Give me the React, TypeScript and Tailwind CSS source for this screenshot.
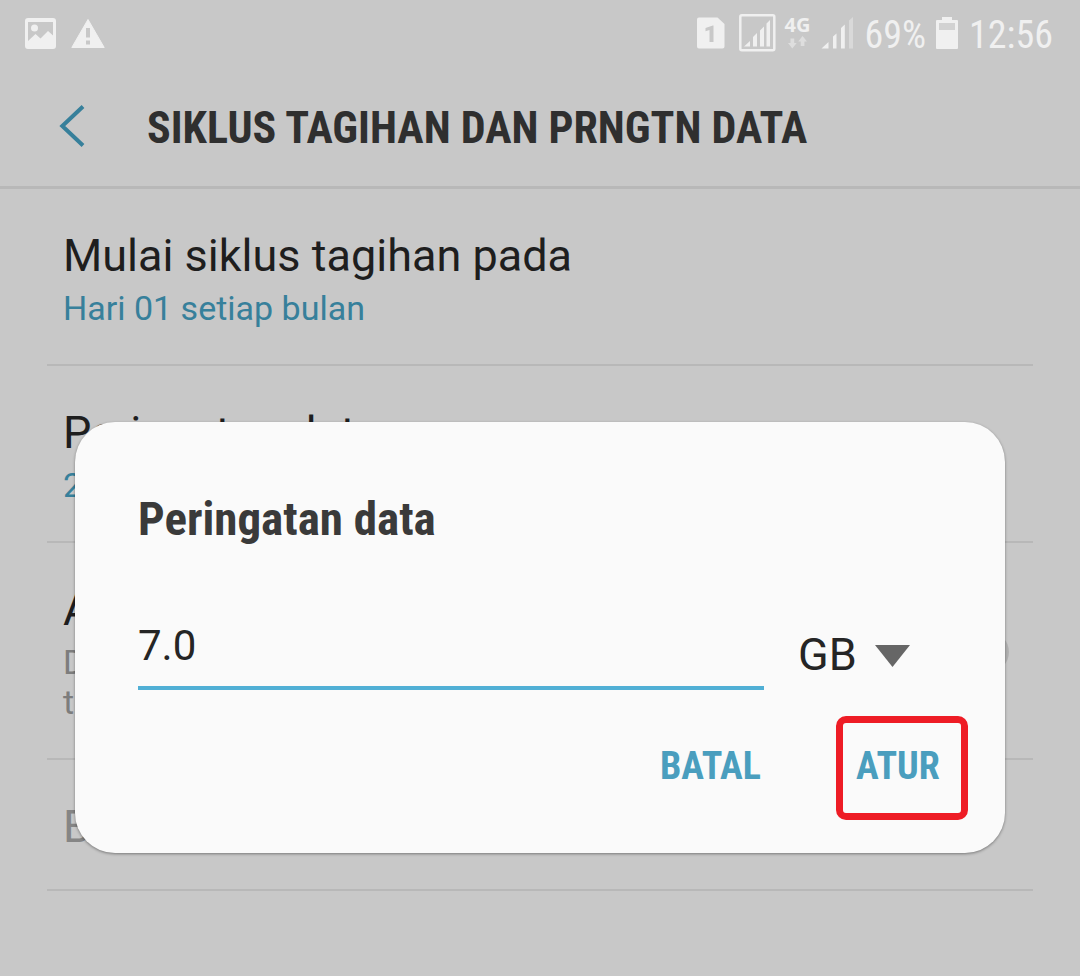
import { useState } from "react";

function StatusBar() {
  return (
    <div className="flex h-[66px] items-center justify-between pr-[27px] pl-[25px] text-[#f0f0f0]">
      <div className="flex items-center gap-[15px]">
        <svg width="31" height="31" viewBox="0 0 31 31" aria-label="Gambar" role="img">
          <path
            fill="currentColor"
            fillRule="evenodd"
            d="M3 0h25a3 3 0 0 1 3 3v25a3 3 0 0 1-3 3H3a3 3 0 0 1-3-3V3a3 3 0 0 1 3-3ZM3 4v19l7.500-7 5 4.500 7.500-7.500 5 4.500V4Z"
          />
          <circle cx="9.500" cy="10" r="3.500" fill="currentColor" />
        </svg>
        <svg width="34" height="31" viewBox="0 0 34 31" aria-label="Peringatan" role="img">
          <path
            fill="currentColor"
            stroke="currentColor"
            strokeLinejoin="round"
            strokeWidth="1"
            d="M17 1.500 33.200 29.500H.8Z"
          />
          <path fill="#c8c8c8" d="M15 10h4v9.500h-4ZM15 22.500h4v4h-4Z" />
        </svg>
      </div>
      <div className="flex items-center">
        <svg width="28" height="32" viewBox="0 0 28 32" aria-label="SIM 1" role="img">
          <path
            fill="currentColor"
            d="M2 .5h18.500L27.500 7v22.500a2 2 0 0 1-2 2H2a2 2 0 0 1-2-2v-27a2 2 0 0 1 2-2Z"
          />
          <path fill="#c8c8c8" d="M16.500 8.500V25h-4V13l-4 1.300v-3.200l7.300-2.600Z" />
        </svg>
        <svg className="ml-[14px]" width="37" height="38" viewBox="0 0 37 38" aria-hidden="true">
          <rect x="1.300" y="1.300" width="34" height="35" rx="1.500" fill="none" stroke="currentColor" strokeWidth="2.500" />
          <path
            fill="currentColor"
            d="M5 32.500 11 27v5.500ZM14 23l4-4v13.500h-4ZM21 16.500l4-4v20h-4ZM27.500 9.500 31 6v26.500h-3.500Z"
          />
        </svg>
        <div className="ml-[9px] flex flex-col items-center gap-[2px]">
          <span className="font-['Open_Sans',sans-serif] text-[20px] leading-[18px] font-bold">4G</span>
          <svg width="19" height="14" viewBox="0 0 19 14" aria-hidden="true" className="text-[#dedede]">
            <path
              fill="currentColor"
              d="M2.500 2.500h3.700v4.500h2.500L4.300 12.500 0 7h2.500ZM12.700 10V5.500h-2.500L14.600 0 19 5.500h-2.600V10Z"
            />
          </svg>
        </div>
        <svg className="ml-[10px]" width="33" height="32" viewBox="0 0 33 32" aria-label="Sinyal" role="img">
          <path fill="currentColor" d="M.5 31.500 7.500 25v6.500ZM12 19.500l3.500-3v15H12ZM20 11l3.800-3.500v24H20Z" />
          <path fill="#d9d9d9" d="M28 3.500 32 0v31.500h-4Z" />
        </svg>
        <span className="ml-[11px] pt-1 font-['Roboto_Condensed',Roboto,sans-serif] text-[38px] leading-[46px]">69%</span>
        <svg className="ml-[10px]" width="22" height="32" viewBox="0 0 22 32" aria-label="Baterai" role="img">
          <path fill="currentColor" d="M6 0h10v3h5a1 1 0 0 1 1 1v27a1 1 0 0 1-1 1H1a1 1 0 0 1-1-1V4a1 1 0 0 1 1-1h5Z" />
          <path fill="#d2d2d2" d="M3 6h16v7H3Z" />
        </svg>
        <span className="ml-[11px] pt-1 font-['Roboto_Condensed',Roboto,sans-serif] text-[38px] leading-[46px]">12:56</span>
      </div>
    </div>
  );
}

function SettingsList() {
  const item = "border-b-2 border-[#b8b8b8] pr-[24px] pl-[16px] pt-[39px]";
  const title = "text-[45px] leading-[56px] text-[#1e1e1e]";
  const value = "mt-1 text-[34px] leading-[40px] text-[#37809b]";
  return (
    <ul className="mx-[47px]">
      <li className={`${item} pb-[36px]`}>
        <h2 className={title}>Mulai siklus tagihan pada</h2>
        <p className={value}>Hari 01 setiap bulan</p>
      </li>
      <li className={`${item} pb-[36px]`}>
        <h2 className={title}>Peringatan data</h2>
        <p className={value}>2,0 GB</p>
      </li>
      <li className={`${item} flex items-center justify-between pb-[36px]`}>
        <div>
          <h2 className={title}>
            <label htmlFor="limit">Atur batas data</label>
          </h2>
          <p className="mt-1 text-[34px] leading-[40px] text-[#7d7d7d]">
            Data seluler akan dinonaktifkan saat batas
            <br />
            tercapai.
          </p>
        </div>
        <input
          id="limit"
          type="checkbox"
          className="h-[40px] w-[40px] appearance-none rounded-full bg-[#b0b0b0]"
        />
      </li>
      <li className={`${item} pb-[34px]`}>
        <h2 className="text-[45px] leading-[56px] text-[#858585]">Batas data</h2>
      </li>
    </ul>
  );
}

function WarningDialog() {
  const [amount, setAmount] = useState("7.0");
  const [unit, setUnit] = useState("GB");
  return (
    <div className="absolute inset-0 flex items-end px-[75px] pb-[123px]">
      <form
        role="dialog"
        aria-labelledby="dialog-title"
        onSubmit={(event) => event.preventDefault()}
        className="w-full rounded-[40px] bg-[#fafafa] pt-[69px] pb-[33px] shadow-[0_1px_3px_rgba(0,0,0,0.4)]"
      >
        <h2
          id="dialog-title"
          className="px-[63px] font-['Roboto_Condensed',Roboto,sans-serif] text-[47px] leading-[56px] font-bold text-[#3a3a3a]"
        >
          Peringatan data
        </h2>
        <div className="mt-[71px] flex items-center gap-[34px] px-[63px]">
          <input
            aria-label="Peringatan data"
            value={amount}
            onChange={(event) => setAmount(event.target.value)}
            className="h-[72px] min-w-0 flex-1 border-b-4 border-[#50afd5] bg-transparent pb-[14px] text-[42px] leading-[54px] text-[#252525] outline-none"
          />
          <div className="relative w-[144px]">
            <select
              aria-label="Satuan"
              value={unit}
              onChange={(event) => setUnit(event.target.value)}
              className="block h-[56px] w-full appearance-none bg-transparent pt-[2px] text-[45px] leading-[54px] text-[#252525] outline-none"
            >
              <option>GB</option>
              <option>MB</option>
            </select>
            <svg
              className="pointer-events-none absolute top-[19px] left-[77px]"
              width="35"
              height="22"
              viewBox="0 0 35 22"
              aria-hidden="true"
            >
              <path fill="#666666" d="M0 0h35L17.500 22Z" />
            </svg>
          </div>
        </div>
        <div className="mt-[26px] flex items-center justify-end gap-[75px] pr-[37px] font-['Roboto_Condensed',Roboto,sans-serif] text-[38px] leading-[46px] font-bold text-[#4a9ebe]">
          <button type="button" className="pb-1">
            BATAL
          </button>
          <button
            type="submit"
            className="h-[104px] w-[132px] rounded-[10px] border-[7px] border-[#ee1c25] pb-1 pl-[13px] text-left"
          >
            ATUR
          </button>
        </div>
      </form>
    </div>
  );
}

export default function App() {
  return (
    <div className="relative min-h-screen overflow-hidden bg-[#c8c8c8] font-[Roboto,sans-serif]">
      <StatusBar />
      <header className="flex h-[123px] items-center border-b-[3px] border-[#b8b8b8] pl-[59px]">
        <button type="button" aria-label="Kembali" className="text-[#37809b]">
          <svg width="26" height="42" viewBox="0 0 26 42" fill="none" aria-hidden="true" className="block">
            <path stroke="currentColor" strokeWidth="4" d="M24 1.500 3.300 21 24 40.500" />
          </svg>
        </button>
        <h1 className="ml-[62px] pt-1 font-['Roboto_Condensed',Roboto,sans-serif] text-[44px] leading-[56px] font-bold text-[#2f2f2f]">
          SIKLUS TAGIHAN DAN PRNGTN DATA
        </h1>
      </header>
      <SettingsList />
      <WarningDialog />
    </div>
  );
}
